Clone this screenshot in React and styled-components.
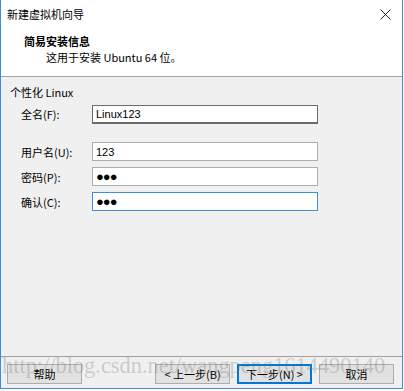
import React from "react";
import styled, { createGlobalStyle } from "styled-components";

const Global = createGlobalStyle`
  html, body { margin: 0; padding: 0; background: #ffffff; }
  body { font-family: "Noto Sans CJK SC", "Liberation Sans", sans-serif; font-size: 11px; color: #000; }
`;

const Window = styled.div`
  position: relative;
  box-sizing: border-box;
  width: 403px;
  height: 389px;
  display: flex;
  flex-direction: column;
  border: 1px solid #3c8fdb;
  border-top: none;
  background: #f0f0f0;
  overflow: hidden;
`;

const TitleBar = styled.div`
  height: 28px;
  display: flex;
  align-items: center;
  justify-content: space-between;
  padding: 0 11px 0 6px;
  background: #ffffff;
  line-height: 14px;
`;

const Header = styled.div`
  height: 49px;
  background: #ffffff;
  display: flex;
  flex-direction: column;
  padding: 6px 0 0 23px;
  box-sizing: border-box;
  border-bottom: 1px solid #a0a0a0;
`;

const Heading = styled.div`
  font-weight: bold;
  line-height: 14px;
`;

const Subtitle = styled.div`
  line-height: 14px;
  margin-top: 2px;
  padding-left: 22px;
`;

const Body = styled.div`
  flex: 1;
  display: flex;
  flex-direction: column;
  padding: 8px 0 0 9px;
`;

const GroupTitle = styled.div`
  line-height: 14px;
`;

const Form = styled.div`
  display: grid;
  grid-template-columns: 71px 226px;
  row-gap: 6px;
  margin: 6px 0 0 11px;
  align-items: center;
`;

const Label = styled.div`
  line-height: 14px;
  align-self: ${(p) => (p.$top ? "start" : "center")};
  margin-top: ${(p) => (p.$top ? "2px" : "0")};
`;

const Input = styled.div`
  box-sizing: border-box;
  height: 19px;
  display: flex;
  align-items: center;
  padding-left: 3px;
  background: #ffffff;
  border: 1px solid ${(p) => (p.$tone === "dark" ? "#6b6b6b" : p.$tone === "focus" ? "#3c8fdb" : "#adadad")};
  border-bottom-width: ${(p) => (p.$tone === "dark" ? "2px" : "1px")};
  margin-bottom: ${(p) => (p.$gapAfter ? "12px" : "0")};
  font-family: "Liberation Sans", "Noto Sans CJK SC", sans-serif;
  font-size: 11px;
`;

const Dots = styled.span`
  font-size: 13px;
  letter-spacing: -1px;
  line-height: 1;
`;

const Footer = styled.div`
  border-top: 1px solid #a0a0a0;
  display: flex;
  align-items: flex-start;
  padding: 7px 7px 0 6px;
  height: 32px;
  box-sizing: border-box;
`;

const Button = styled.button`
  box-sizing: border-box;
  width: 75px;
  height: 20px;
  padding: 0;
  margin-left: ${(p) => p.$ml || "0"};
  background: #e1e1e1;
  border: 1px solid ${(p) => (p.$primary ? "#0078d7" : "#adadad")};
  box-shadow: ${(p) => (p.$primary ? "inset 0 0 0 1px #0078d7" : "none")};
  font-family: "Noto Sans CJK SC", "Liberation Sans", sans-serif;
  font-size: 11px;
  color: #000;
  line-height: 14px;
`;

const Watermark = styled.div`
  position: absolute;
  left: 1px;
  top: 353px;
  font-family: "Liberation Serif", serif;
  font-size: 22.4px;
  color: rgba(110, 110, 110, 0.3);
  white-space: nowrap;
  pointer-events: none;
`;

const CloseIcon = () => (
  <svg width="11" height="11" viewBox="0 0 11 11">
    <path d="M0.5 0.5 L10.5 10.5 M10.5 0.5 L0.5 10.5" stroke="#222" strokeWidth="1" />
  </svg>
);

export default function App() {
  return (
    <>
      <Global />
      <Window>
        <TitleBar>
          <span>新建虚拟机向导</span>
          <CloseIcon />
        </TitleBar>
        <Header>
          <Heading>简易安装信息</Heading>
          <Subtitle>这用于安装 Ubuntu 64 位。</Subtitle>
        </Header>
        <Body>
          <GroupTitle>个性化 Linux</GroupTitle>
          <Form>
            <Label $top>全名(F):</Label>
            <Input $tone="dark" $gapAfter>Linux123</Input>
            <Label>用户名(U):</Label>
            <Input>123</Input>
            <Label>密码(P):</Label>
            <Input><Dots>●●●</Dots></Input>
            <Label>确认(C):</Label>
            <Input $tone="focus"><Dots>●●●</Dots></Input>
          </Form>
        </Body>
        <Footer>
          <Button>帮助</Button>
          <Button $ml="73px">&lt; 上一步(B)</Button>
          <Button $ml="7px" $primary>下一步(N) &gt;</Button>
          <Button $ml="7px">取消</Button>
        </Footer>
        <Watermark>http://blog.csdn.net/wangpeng1614490140</Watermark>
      </Window>
    </>
  );
}
